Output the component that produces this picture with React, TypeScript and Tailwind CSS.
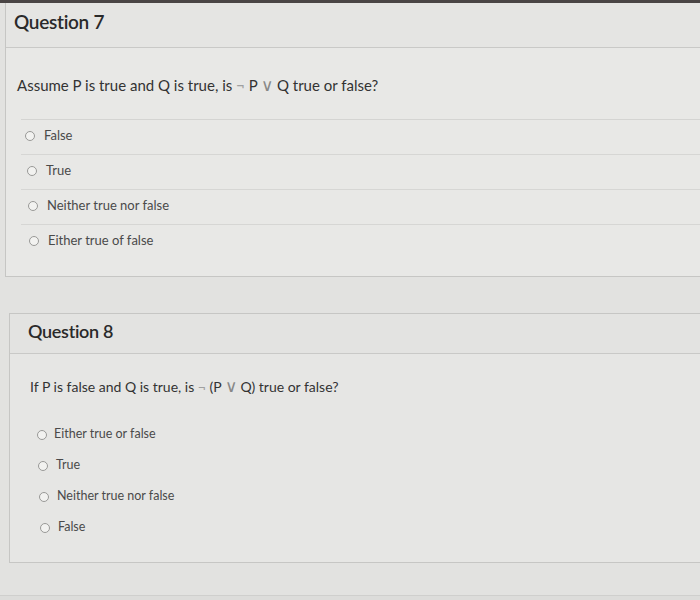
const font = { fontFamily: "Lato, 'Liberation Sans', sans-serif" };

function Radio() {
  return <span className="inline-block w-[10px] h-[10px] rounded-full border border-[#999997] bg-[#f2f2f0] shrink-0" />;
}

function Neg() {
  return <span className="text-[#a0a0a0]">¬</span>;
}

function Or() {
  return <span className="text-[17px] leading-none font-light text-[#888]">∨</span>;
}

const q7 = [
  { text: "False", pad: "pl-[4px]" },
  { text: "True", pad: "pl-[6px]" },
  { text: "Neither true nor false", pad: "pl-[7px]" },
  { text: "Either true of false", pad: "pl-[8px]" },
];

const q8 = [
  { text: "Either true or false", pad: "pl-[27px]", gap: "gap-[7px]" },
  { text: "True", pad: "pl-[28px]", gap: "gap-[8px]" },
  { text: "Neither true nor false", pad: "pl-[29px]", gap: "gap-[8px]" },
  { text: "False", pad: "pl-[30px]", gap: "gap-[8px]" },
];

export default function App() {
  return (
    <div className="w-[700px] h-[600px] overflow-hidden bg-[#e2e2e0] flex flex-col" style={font}>
      <div className="h-[3px] bg-[#4a4545] shrink-0" />

      {/* Question 7 */}
      <div className="ml-[5px] mr-[-20px] border-l border-b border-[#c6c6c4] bg-[#e8e8e6]">
        <div className="h-[45px] flex items-center pl-[8px] pb-[6px] bg-[#e5e5e3] border-b border-[#c9c9c7]">
          <span className="text-[19px] font-semibold text-[#2a2a2a] tracking-[-0.3px]">Question 7</span>
        </div>
        <div className="pt-[27px] pl-[11px] text-[15px] text-[#333] leading-[20px] h-[71px]">
          Assume P is true and Q is true, is <Neg /> P <Or /> Q true or false?
        </div>
        <div className="ml-[15px] border-t border-[#d4d4d2] pb-[16px]">
          {q7.map((a, i) => (
            <div
              key={a.text}
              className={`h-[35px] flex items-center pb-[3px] gap-[9px] ${a.pad} ${i < q7.length - 1 ? "border-b border-[#d6d6d4]" : ""}`}
            >
              <Radio />
              <span className="text-[13px] text-[#4a4a4a]">{a.text}</span>
            </div>
          ))}
        </div>
      </div>

      {/* Question 8 */}
      <div className="mt-[36px] ml-[9px] mr-[-20px] border-l border-t border-b border-[#c6c6c4] bg-[#e6e6e4] h-[250px]">
        <div className="h-[40px] flex items-center pl-[18px] pb-[5px] bg-[#e3e3e1] border-b border-[#c9c9c7]">
          <span className="text-[18px] font-semibold text-[#2a2a2a] tracking-[-0.3px]">Question 8</span>
        </div>
        <div className="pt-[23px] pl-[20px] text-[14px] text-[#333] leading-[20px] h-[65px]">
          If P is false and Q is true, is <Neg /> (P <Or /> Q) true or false?
        </div>
        {q8.map((a) => (
          <div key={a.text} className={`h-[31px] flex items-center ${a.gap} ${a.pad}`}>
            <Radio />
            <span className="text-[12.5px] text-[#4a4a4a]">{a.text}</span>
          </div>
        ))}
      </div>

      <div className="flex-1 mt-[32px] border-t border-[#cfcfcd] bg-[#dcdcda]" />
    </div>
  );
}
